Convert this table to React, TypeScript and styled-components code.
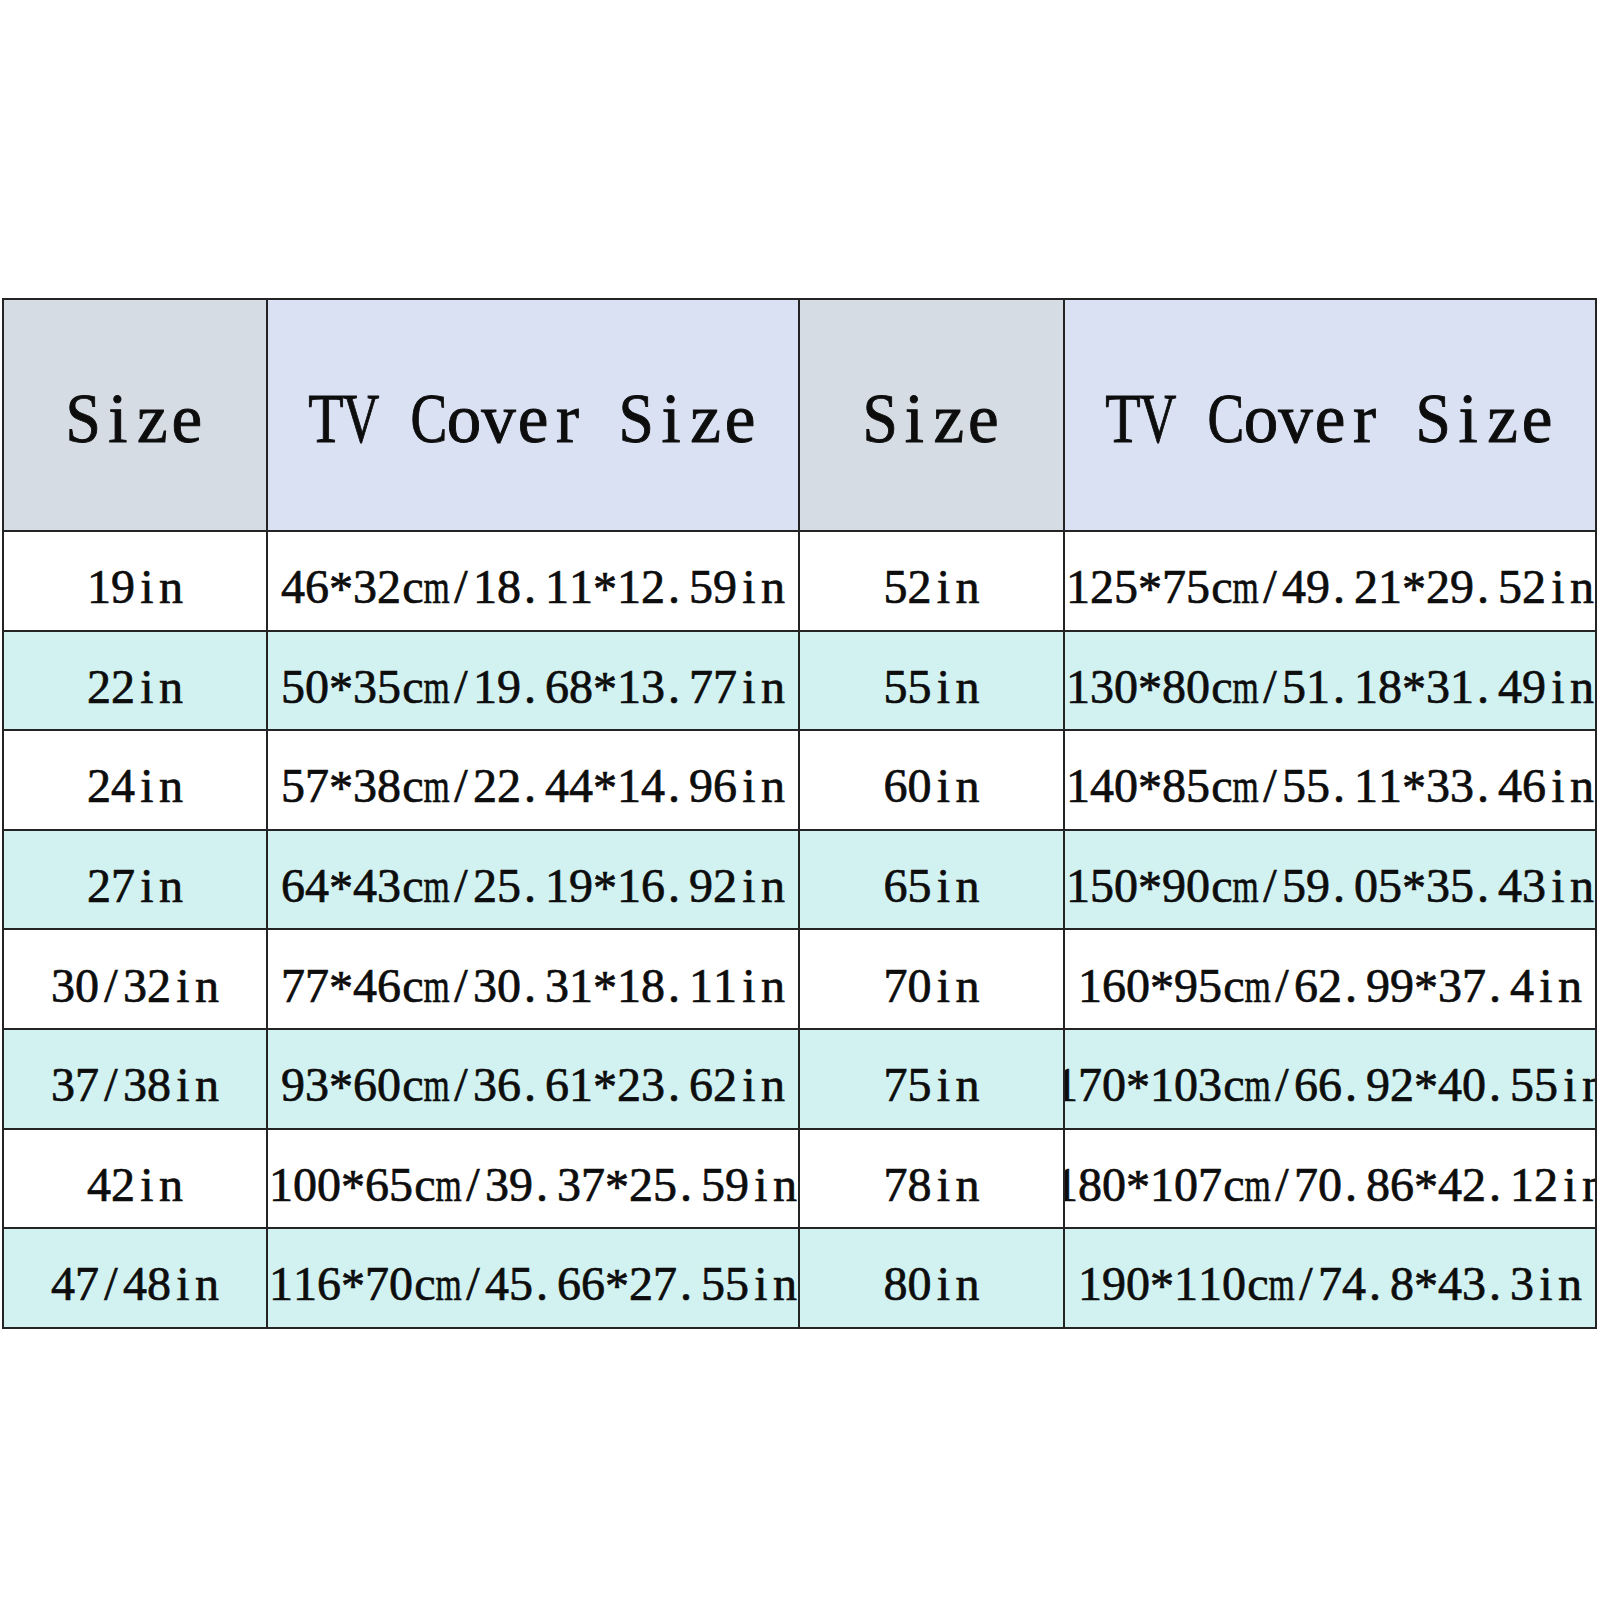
import React from "react";
import styled, { createGlobalStyle } from "styled-components";

const Global = createGlobalStyle`
  html, body { margin: 0; padding: 0; background: #ffffff; }
  body { width: 1600px; min-height: 1600px; }
`;

const Page = styled.div`
  box-sizing: border-box;
  width: 1600px;
  height: 1600px;
  padding: 298px 0 0 2px;
  background: #ffffff;
`;

const LINE = "#242424";

const Table = styled.div`
  display: grid;
  grid-template-columns: 264px 532px 265px 532px;
  grid-template-rows: 232px repeat(8, 99.6px);
  width: max-content;
  border-top: 2px solid ${LINE};
  border-left: 2px solid ${LINE};
  font-family: "Liberation Serif", "Times New Roman", serif;
  color: #0d0d0d;
`;

const Cell = styled.div<{ $bg: string; $head?: boolean }>`
  box-sizing: border-box;
  display: flex;
  align-items: center;
  justify-content: center;
  overflow: hidden;
  white-space: nowrap;
  background: ${(p) => p.$bg};
  border-right: 2px solid ${LINE};
  border-bottom: 2px solid ${LINE};
  font-size: ${(p) => (p.$head ? "69px" : "48px")};
  padding-top: ${(p) => (p.$head ? "9px" : "12px")};
  line-height: 1.15;
  -webkit-text-stroke: ${(p) => (p.$head ? "0.9px" : "0.7px")} #0d0d0d;
`;

const Text = styled.span`
  display: inline-flex;
  flex-shrink: 0;
`;

const Glyph = styled.span<{ $left?: boolean }>`
  display: inline-flex;
  justify-content: ${(p) => (p.$left ? "flex-start" : "center")};
  width: 0.5em;
  flex-shrink: 0;
  padding-left: ${(p) => (p.$left ? "0.06em" : "0")};
  box-sizing: border-box;
`;

const Ink = styled.span`
  display: inline-block;
  flex-shrink: 0;
`;

const squeeze: Record<string, number> = {
  m: 0.7,
  T: 0.84,
  V: 0.74,
  C: 0.8,
  S: 0.92,
};

const Mono: React.FC<{ text: string }> = ({ text }) => (
  <Text>
    {Array.from(text).map((ch, i) => {
      const s = squeeze[ch];
      const shift = ch === "*" ? " translateY(0.05em)" : "";
      const style =
        s || shift
          ? { transform: `${s ? `scaleX(${s})` : ""}${shift}` }
          : undefined;
      return (
        <Glyph key={i} $left={ch === "."}>
          <Ink style={style}>{ch === " " ? "\u00a0" : ch}</Ink>
        </Glyph>
      );
    })}
  </Text>
);

const rows: [string, string, string, string][] = [
  ["19in", "46*32cm/18.11*12.59in", "52in", "125*75cm/49.21*29.52in"],
  ["22in", "50*35cm/19.68*13.77in", "55in", "130*80cm/51.18*31.49in"],
  ["24in", "57*38cm/22.44*14.96in", "60in", "140*85cm/55.11*33.46in"],
  ["27in", "64*43cm/25.19*16.92in", "65in", "150*90cm/59.05*35.43in"],
  ["30/32in", "77*46cm/30.31*18.11in", "70in", "160*95cm/62.99*37.4in"],
  ["37/38in", "93*60cm/36.61*23.62in", "75in", "170*103cm/66.92*40.55in"],
  ["42in", "100*65cm/39.37*25.59in", "78in", "180*107cm/70.86*42.12in"],
  ["47/48in", "116*70cm/45.66*27.55in", "80in", "190*110cm/74.8*43.3in"],
];

const HEAD_SIZE = "#d6dce4";
const HEAD_COVER = "#d9e1f2";
const ROW_WHITE = "#ffffff";
const ROW_CYAN = "#d2f2f1";

export default function App() {
  return (
    <>
      <Global />
      <Page>
        <Table>
          <Cell $bg={HEAD_SIZE} $head>
            <Mono text="Size" />
          </Cell>
          <Cell $bg={HEAD_COVER} $head>
            <Mono text="TV Cover Size" />
          </Cell>
          <Cell $bg={HEAD_SIZE} $head>
            <Mono text="Size" />
          </Cell>
          <Cell $bg={HEAD_COVER} $head>
            <Mono text="TV Cover Size" />
          </Cell>
          {rows.map((r, ri) =>
            r.map((t, ci) => (
              <Cell key={`${ri}-${ci}`} $bg={ri % 2 === 0 ? ROW_WHITE : ROW_CYAN}>
                <Mono text={t} />
              </Cell>
            ))
          )}
        </Table>
      </Page>
    </>
  );
}
